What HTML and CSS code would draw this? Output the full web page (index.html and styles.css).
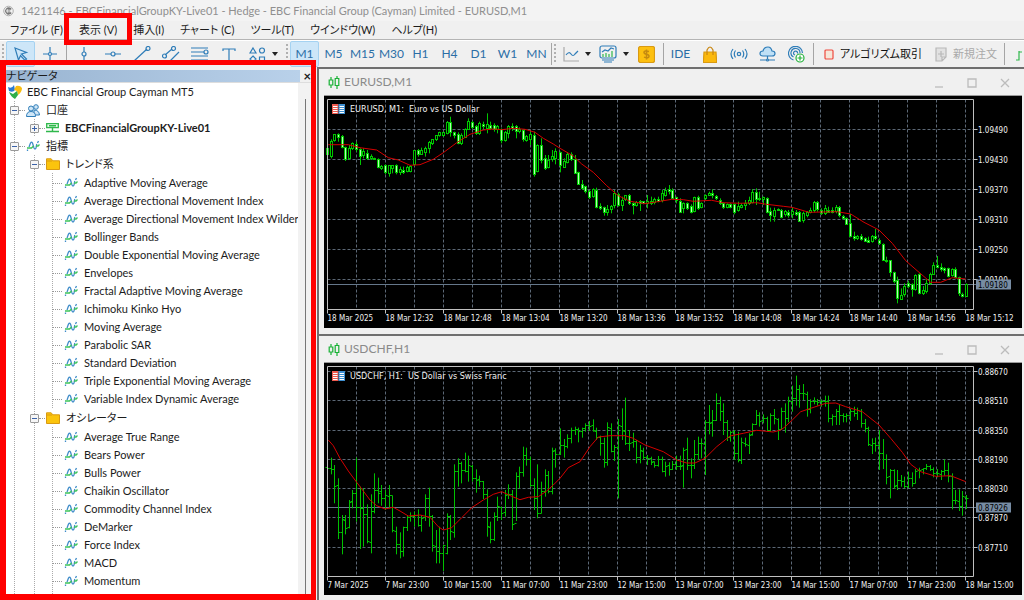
FILE: index.html
```html
<!DOCTYPE html>
<html lang="ja">
<head>
<meta charset="utf-8">
<title>EBC Financial Group Cayman MT5</title>
<link rel="stylesheet" href="styles.css">
</head>
<body>
<svg class="defs" aria-hidden="true">
  <symbol id="indicator" viewBox="0 0 14 12">
    <path d="M1.500 11V9.500M3 7l1.500-4q1-1.500 2 0l1.500 5q1 2 2 0l.8-4M11.500 3l1-2" fill="none" stroke="#3f8cc9" stroke-width="1.300"/>
    <path d="M1 8h4.500l2-2M10 6h2l1.500-1.500" fill="none" stroke="#3cc45a" stroke-width="1.400"/>
  </symbol>
  <symbol id="folder" viewBox="0 0 14 12">
    <path d="M.5 11.500V.8h4.700l1.600 2h6.700v8.700z" fill="#fbc40d" stroke="#d99a12"/>
    <path d="M1 3h5" stroke="#d99a12"/>
  </symbol>
  <symbol id="candles" viewBox="0 0 12 13">
    <path d="M3 1v11M9 0v13" stroke="#18b135" stroke-width="1.200"/>
    <path d="M1.200 4h3.600v5H1.200zM7.200 2.500h3.600v7H7.200z" fill="#f0f0f0" stroke="#18b135" stroke-width="1.200"/>
  </symbol>
</svg>

<header class="titlebar">
  <svg class="app-icon" viewBox="0 0 12 12"><circle cx="6" cy="6" r="5.200" fill="none" stroke="#aaa"/><path d="M9 3.500Q4 1 2.800 6 4 11 9 8.500M5 4h4M5 6h3M5 8h4" fill="none" stroke="#777" stroke-width="1.300"/></svg>
  <span>1421146 - EBCFinancialGroupKY-Live01 - Hedge - EBC Financial Group (Cayman) Limited - EURUSD,M1</span>
</header>

<nav class="menubar">
  <button>ファイル (F)</button>
  <button class="marked">表示 (V)</button>
  <button>挿入(I)</button>
  <button>チャート (C)</button>
  <button>ツール(T)</button>
  <button>ウインドウ(W)</button>
  <button>ヘルプ(H)</button>
</nav>

<div class="toolbar">
  <i class="grip"></i>
  <button class="tool on" aria-label="Cursor"><svg width="16" height="16" viewBox="0 0 16 16"><path d="M2 2l11.500 4.500-5 1.500 5 5-1.500 1.500-4.500-5-2 4.500z"/></svg></button>
  <button class="tool" aria-label="Crosshair"><svg width="16" height="16" viewBox="0 0 16 16"><path d="M8 1v5.500M8 9.500V15M1 8h5.500M9.500 8H15"/><circle cx="8" cy="8" r="1.500"/></svg></button>
  <i class="sep"></i>
  <button class="tool" aria-label="Vertical line"><svg width="16" height="16" viewBox="0 0 16 16"><path d="M8 1v5M8 10v5"/><circle cx="8" cy="8" r="2"/></svg></button>
  <button class="tool" aria-label="Horizontal line"><svg width="16" height="16" viewBox="0 0 16 16"><path d="M0 8h6M10 8h6"/><circle cx="8" cy="8" r="2"/></svg></button>
  <button class="tool" aria-label="Trendline"><svg width="18" height="16" viewBox="0 0 18 16"><path d="M1 15L14 3"/><circle cx="15" cy="2.500" r="2"/></svg></button>
  <button class="tool" aria-label="Channel"><svg width="18" height="16" viewBox="0 0 18 16"><path d="M3 9l7-6M8 15l9-9"/><circle cx="11.500" cy="2.500" r="2"/><circle cx="2.500" cy="10" r="2"/></svg></button>
  <button class="tool" aria-label="Fibonacci"><svg width="18" height="16" viewBox="0 0 18 16"><path d="M0 2h17M0 6h13M0 10h17M0 14h17"/><circle cx="15" cy="6" r="2"/></svg></button>
  <button class="tool" aria-label="Text"><svg width="14" height="16" viewBox="0 0 14 16"><path d="M1 5V3h12v2M7 3v12"/></svg></button>
  <button class="tool wide shapes" aria-label="Shapes"><svg width="17" height="17" viewBox="0 0 17 17"><path d="M4 2l3 5H1z"/><circle cx="13" cy="4.500" r="2.500"/><path d="M4 10l3 3-3 3-3-3zM10.500 11h5v5h-5z"/></svg><b class="caret"></b></button>
  <i class="grip"></i>
  <button class="tool on">M1</button>
  <button class="tool">M5</button>
  <button class="tool">M15</button>
  <button class="tool">M30</button>
  <button class="tool">H1</button>
  <button class="tool">H4</button>
  <button class="tool">D1</button>
  <button class="tool">W1</button>
  <button class="tool">MN</button>
  <i class="sep tight"></i><i class="grip"></i>
  <button class="tool wide" aria-label="Chart type"><svg width="16" height="16" viewBox="0 0 16 16"><path d="M1 1v14h15" stroke="#aaa"/><path d="M3 9q3-4 5-1t4 0l3-3"/></svg><b class="caret"></b></button>
  <button class="tool wide" aria-label="Indicators"><svg width="18" height="18" viewBox="0 0 18 18"><rect x="1" y="1" width="16" height="12" rx="2"/><path d="M3 15h12M5 17h8"/><path d="M3 7l3-2 3 1 3-3 3 1"/><path d="M4 12V9M7 12V8M10 12V9M13 12V6" stroke="#2fb84b"/></svg><b class="caret"></b></button>
  <button class="tool" aria-label="Trade"><svg width="17" height="17" viewBox="0 0 17 17"><rect x=".5" y=".5" width="16" height="16" rx="2" fill="#fdc010" stroke="#d99a12"/><path d="M11 5.500q-5-1.500-5 .8 0 1.700 2.500 2t2.500 2q0 2.500-5 .8M8.500 3.500v10" stroke="#c58a10" stroke-width="1.500"/></svg></button>
  <i class="sep"></i>
  <button class="tool">IDE</button>
  <button class="tool" aria-label="Market"><svg width="14" height="17" viewBox="0 0 14 17"><path d="M1 6h12l.7 10.500H.3z" fill="#fbb90e" stroke="#d99a12"/><path d="M4 9V4q3-6 6 0v5" stroke="#c88612"/></svg></button>
  <button class="tool" aria-label="Signals"><svg width="18" height="12" viewBox="0 0 18 12"><circle cx="9" cy="6" r="1.700"/><path d="M5.500 2.500q-2.500 3.500 0 7M12.500 2.500q2.500 3.500 0 7M3 1q-4 5 0 10M15 1q4 5 0 10"/></svg></button>
  <button class="tool" aria-label="VPS"><svg width="17" height="16" viewBox="0 0 17 16"><path d="M4 10Q1 10 1 7.500T4 5q1-4 5-4 3 0 4 4 3 0 3 2.500T13 10z" fill="#bfe0f6"/><path d="M8.500 10v3M1 14h6M10 14h6"/><circle cx="8.500" cy="14" r="1"/></svg></button>
  <button class="tool" aria-label="Copy trading"><svg width="17" height="17" viewBox="0 0 17 17"><path d="M5.500 14A7 7 0 1 1 14.500 7M5.500 11A4.500 4.500 0 1 1 12 7M7 9a2 2 0 1 1 2.500-1.500"/><circle cx="12" cy="12" r="4" fill="#fff" stroke="#23b13a"/><path d="M12 9.500v5M9.500 12h5" stroke="#23b13a"/></svg></button>
  <i class="sep"></i>
  <button class="tool text"><svg width="10" height="11" viewBox="0 0 10 11"><rect x="1" y="1" width="8" height="9" rx="1" fill="#f6e6d8" stroke="#ee4a3e"/></svg>アルゴリズム取引</button>
  <button class="tool text" disabled><svg width="12" height="15" viewBox="0 0 12 15"><path d="M1 1h10v9l-4 4H1zM11 10H7v4M6 4v6M3 7h6" stroke="#b8b8b8" fill="#e2e2e2"/></svg>新規注文</button>
  <i class="sep"></i>
  <button class="tool last" aria-label="Bar chart"><svg width="16" height="16" viewBox="0 0 16 16"><path d="M1 14h3V5M4 6h3M11 1v9M11 4H9M11 9h4" stroke="#2fb84b"/></svg></button>
</div>

<main class="workspace">
  <aside class="navigator">
    <div class="nav-head"><span>ナビゲータ</span><button aria-label="閉じる">×</button></div>
    <div class="nav-body">
      <div class="tree">
        <div class="row root"><svg width="14" height="14" viewBox="0 0 14 14"><path d="M0 2q4 2 6-2l1 5q-2 3-6 1z" fill="#2a7ad1"/><path d="M8 1q4-1 6 2 0 4-4 7l-1-4-3-1z" fill="#f9bd12"/><path d="M1 7l4 2 4-3 1 4-3 4q-4-2-6-7z" fill="#2eae49"/></svg>EBC Financial Group Cayman MT5</div>
        <ul class="l1">
          <li>
            <div class="row"><i class="box"></i><svg width="14" height="13" viewBox="0 0 14 13"><g fill="#cfe6f7" stroke="#2f7db8"><circle cx="10" cy="3" r="2.300"/><path d="M8 6q5 0 5.500 5H8z"/><circle cx="5" cy="4.500" r="2.500"/><path d="M.5 12.500q0-5 4.500-5t4.500 5z"/></g></svg>口座</div>
            <ul class="l2"><li><div class="row strong"><i class="box plus"></i><svg width="13" height="10" viewBox="0 0 13 10"><path d="M.7.7h11.600v4H.7z" fill="#e2f8e5" stroke="#2fb84b" stroke-width="1.300"/><path d="M3 2.700h7M6.500 5v3M0 8.500h13" stroke="#2fb84b" stroke-width="1.400"/></svg>EBCFinancialGroupKY-Live01</div></li></ul>
          </li>
          <li>
            <div class="row"><i class="box"></i><svg width="14" height="12"><use href="#indicator"/></svg>指標</div>
            <ul class="l2">
              <li><div class="row"><i class="box"></i><svg width="14" height="12"><use href="#folder"/></svg>トレンド系</div>
                <ul class="l3" data-items="Adaptive Moving Average|Average Directional Movement Index|Average Directional Movement Index Wilder|Bollinger Bands|Double Exponential Moving Average|Envelopes|Fractal Adaptive Moving Average|Ichimoku Kinko Hyo|Moving Average|Parabolic SAR|Standard Deviation|Triple Exponential Moving Average|Variable Index Dynamic Average"></ul>
              </li>
              <li><div class="row"><i class="box"></i><svg width="14" height="12"><use href="#folder"/></svg>オシレーター</div>
                <ul class="l3 open" data-items="Average True Range|Bears Power|Bulls Power|Chaikin Oscillator|Commodity Channel Index|DeMarker|Force Index|MACD|Momentum"></ul>
              </li>
            </ul>
          </li>
        </ul>
      </div>
      <div class="track"></div>
    </div>
    <div class="marker"></div>
  </aside>

  <section class="mdi">
    <article class="window">
      <div class="caption"><svg width="12" height="13"><use href="#candles"/></svg><h2>EURUSD,M1</h2>
        <button aria-label="最小化"><svg width="10" height="10" viewBox="0 0 10 10"><path d="M1 9h8"/></svg></button>
        <button aria-label="最大化"><svg width="10" height="10" viewBox="0 0 10 10"><path d="M1 1h8v8H1z"/></svg></button>
        <button aria-label="閉じる"><svg width="10" height="10" viewBox="0 0 10 10"><path d="M1 1l8 8M9 1L1 9"/></svg></button>
      </div>
      <svg class="chart" id="eurusd" viewBox="324 96 698 232"></svg>
    </article>
    <article class="window">
      <div class="caption"><svg width="12" height="13"><use href="#candles"/></svg><h2>USDCHF,H1</h2>
        <button aria-label="最小化"><svg width="10" height="10" viewBox="0 0 10 10"><path d="M1 9h8"/></svg></button>
        <button aria-label="最大化"><svg width="10" height="10" viewBox="0 0 10 10"><path d="M1 1h8v8H1z"/></svg></button>
        <button aria-label="閉じる"><svg width="10" height="10" viewBox="0 0 10 10"><path d="M1 1l8 8M9 1L1 9"/></svg></button>
      </div>
      <svg class="chart" id="usdchf" viewBox="324 363 698 232"></svg>
    </article>
  </section>
</main>
<script src="charts.js"></script>
</body>
</html>
```
FILE: styles.css
```css
* { box-sizing: border-box; }
body {
  margin: 0;
  height: 100vh;
  overflow: hidden;
  display: flex;
  flex-direction: column;
  background: #f0f0f0;
  color: #1c1c1c;
  font: 11px/18px Lato, "Noto Sans CJK JP", sans-serif;
  font-feature-settings: "palt";
}
button {
  margin: 0;
  padding: 0;
  border: 0;
  background: none;
  color: inherit;
  font: inherit;
  font-feature-settings: inherit;
}
ul { list-style: none; margin: 0; padding: 0; }
svg { flex: none; }
.defs { position: absolute; width: 0; height: 0; }

.titlebar {
  display: flex;
  align-items: center;
  gap: 7px;
  height: 21px;
  padding-left: 3px;
  background: #f3f3f3;
  color: #8f8f8f;
  white-space: nowrap;
}
.app-icon { width: 11px; height: 12px; }

.menubar {
  display: flex;
  gap: 16px;
  height: 19px;
  padding-left: 10px;
  border-bottom: 1px solid #b4b4b4;
  white-space: nowrap;
}
.marked { position: relative; }
.marked::after {
  content: "";
  position: absolute;
  inset: -8px -15px -6px;
  border: 5px solid #f00;
  z-index: 3;
}

.toolbar {
  display: flex;
  align-items: center;
  height: 27px;
  border-top: 1px solid #fff;
  overflow: hidden;
  white-space: nowrap;
}
.grip {
  flex: none;
  width: 2px;
  height: 20px;
  margin: 0 2px;
  background: repeating-linear-gradient(#b0b0b0 0 2px, transparent 2px 4px);
}
.sep { flex: none; width: 1px; height: 22px; margin: 0 2px; background: #a5a5a5; }
.tight { margin: 0; }
.tool {
  flex: none;
  display: flex;
  align-items: center;
  justify-content: center;
  width: 29px;
  height: 26px;
  color: #2b6ea6;
  font-size: 12px;
}
.tool svg { fill: none; stroke: #2f7db8; stroke-width: 1.2; }
.on { background: #cde6f8; border: 1px solid #a5d2f1; border-radius: 2px; }
.wide { width: 37px; gap: 6px; }
.shapes { width: 41px; }
.caret { border: 3px solid transparent; border-top: 4px solid #222; border-bottom: 0; }
.text { width: auto; padding: 0 5px 0 8px; gap: 6px; color: #111; font-size: 11px; }
.text:disabled { color: #aaa; }
.last { margin-left: 2px; }

.workspace { flex: 1; display: flex; min-height: 0; }
.navigator {
  position: relative;
  flex: none;
  width: 316px;
  padding: 3px 5px 6px 6px;
  display: flex;
  flex-direction: column;
}
.nav-head { display: flex; height: 12px; line-height: 12px; background: #f0f0f0; }
.nav-head span { flex: 1; background: linear-gradient(90deg, #99b4d1, #b9d1ea); }
.nav-head button { width: 10px; margin-left: 1px; font-size: 13px; font-weight: 700; text-align: right; }
.nav-body { flex: 1; display: flex; min-height: 0; overflow: hidden; border-top: 1px solid #ddd; background: #fff; }
.tree { flex: 1; overflow: hidden; white-space: nowrap; }
.track { width: 13px; padding-left: 7px; background: #f2f2f2; }
.track::before { content: ""; display: block; width: 1px; height: 100%; margin-top: 16px; background: #777; }
.marker { position: absolute; inset: -7px 0 0; border: 6px solid #f00; border-width: 5px 5px 6px 6px; z-index: 2; }
.row { display: flex; align-items: center; gap: 6px; height: 18px; }
.root { padding-left: 2px; gap: 5px; }
.strong { font-weight: 700; }
.box {
  position: relative;
  flex: none;
  width: 9px;
  height: 9px;
  border: 1px solid #999;
  border-radius: 1px;
  background: linear-gradient(#3a62a8, #3a62a8) center / 5px 1px no-repeat #f6f6f6;
}
.plus { background: linear-gradient(#3a62a8, #3a62a8) center / 5px 1px no-repeat, linear-gradient(#3a62a8, #3a62a8) center / 1px 5px no-repeat #f6f6f6; }
.box::after { content: ""; position: absolute; left: 8px; top: 3px; width: 6px; border-top: 1px dotted #999; }
.box + svg { margin-left: 1px; }
.l1 { padding-left: 4px; background: repeating-linear-gradient(#aaa 0 1px, #fff 1px 2px) 8px 0 / 1px 100% no-repeat; }
.l2 { padding-left: 20px; background: repeating-linear-gradient(#aaa 0 1px, #fff 1px 2px) 24px 0 / 1px 100% no-repeat; }
.l3 { padding: 1px 0 0 22px; background: repeating-linear-gradient(#aaa 0 1px, #fff 1px 2px) 22px 0 / 1px 100% no-repeat; }
.open { padding-bottom: 8px; }
.l2 > li + li { margin-top: 1px; }
.l3 .row::before { content: ""; flex: none; width: 10px; border-top: 1px dotted #999; }
.l3 .row svg { margin-left: -4px; }

.mdi {
  flex: 1;
  min-width: 0;
  margin-left: 1px;
  border: 2px solid #6f6f6f;
  border-width: 2px 0 0 2px;
  overflow: hidden;
}
.window { padding: 0 2px 6px 5px; border-bottom: 2px solid #6f6f6f; }
.caption { display: flex; align-items: center; height: 27px; padding: 0 12px 0 4px; border-bottom: 1px solid #9a9a9a; }
.caption h2 { flex: 1; margin: 0 0 0 4px; font-size: 12px; font-weight: 400; color: #8a8a8a; }
.caption button { width: 10px; margin-left: 23px; padding-top: 2px; }
.caption button svg { display: block; fill: none; stroke: #bcbcbc; stroke-width: 1.3; }
.chart { display: block; width: 100%; height: auto; background: #000; font: 8px "DejaVu Sans Condensed", "DejaVu Sans", sans-serif; }
.chart text { fill: #f2f2f2; }
.chart .heading { font-size: 9px; }
.grid { fill: none; stroke: #5c6876; stroke-dasharray: 3 2; }
.axis { fill: none; stroke: #c0c0c0; }
.level { stroke: #65778a; }
.bars { fill: none; stroke: #00c000; }
.candle-up { fill: #000; stroke: #00c800; }
.candle-down { fill: #b4ffb4; stroke: #00c800; }
.average { fill: none; stroke: #d40000; }
.tag { fill: #778ca3; }
.chart .tag-text { fill: #000; }
```
FILE: charts.js
```js
document.querySelectorAll('.l3').forEach(list => {
  list.innerHTML = list.dataset.items.split('|').map(name =>
    `<li><div class="row"><svg width="14" height="12"><use href="#indicator"/></svg>${name}</div></li>`).join('');
});

// Each series run: start x, base y, then one record per bar in thirds of a unit.
// Candle record: high low bodyTop bodyBottom (trailing f = falling bar).
const eurusd = [
  [327.5, 95, '150 182 160 178f,133 190 138 182,118 140 118 137,115 140 117 125f,120 160 125 157f,155 198 157 192f,150 195 160 190,142 165 145 160,140 170 148 163f,160 210 162 183f,160 190 168 180,165 195 175 190f,178 195 185 192,188 195 190 194f,190 220 193 217f,210 225 213 220,208 238 212 234f,210 245 212 235,210 235 212 222,208 238 212 233f,215 240 222 230,215 237 225 232f,212 232 217 228,210 232 215 230,165 212 167 210,162 185 167 180f,158 180 165 178,155 185 160 172,138 175 142 160,132 150 132 145,120 138 122 135,110 125 112 122,110 125 113 122,78 118 82 115,65 125 82 112f,110 130 112 122f,112 148 117 143f,115 150 120 143,100 128 102 125,70 105 78 103,78 102 82 98f,90 120 95 115f,80 120 85 115,80 103 88 95f,55 115 87 98,80 105 90 100f,85 110 92 103f,90 115 95 103,100 145 103 137f,108 140 112 137,90 130 93 115,85 108 95 102f,90 130 95 110f,97 115 102 108,102 140 105 133f,120 140 123 135,110 150 118 133,110 245 120 237f,148 232 150 228,130 205 150 195f,180 225 190 220f,180 220 195 215,165 200 185 195,160 208 170 192'],
  [560.5, 95, '170 232 172 210f,190 218 198 215,172 205 178 202,172 198 178 193f,180 237 192 235f,230 270 233 268f,255 285 267 280f,272 295 275 290f,285 312 290 308f,280 308 283 305,278 340 285 337f,325 345 333 340f,335 362 337 352f,330 362 343 353,330 355 335 345,285 340 295 330,293 335 298 332f,305 348 315 330,300 318 302 315,297 330 302 325f,322 358 325 330f,318 335 322 332,315 348 318 325f,318 328 320 325f,300 340 318 325,305 330 320 325,308 328 312 322,305 322 312 318f,285 322 295 317,278 305 285 300,270 298 284 290f,280 312 285 308f,305 325 308 318f,310 352 318 350f,322 355 325 340,322 345 325 340f,328 355 335 352f,305 352 307 348,302 345 307 340f,322 340 325 338,298 315 302 312,290 302 295 300,283 310 295 302f,300 315 305 312f,310 330 315 325f,322 342 325 337f,325 340 327 335,325 340 328 338f,325 358 327 350f,320 350 335 348,325 340 330 335,315 345 325 330,305 330 315 325,282 325 293 322,280 330 292 312f,290 318 310 314f,305 330 308 315,307 355 310 353f,338 380 350 362f,338 380 345 362,340 348 343 347,342 370 345 365f,345 365 350 360,345 368 352 360f'],
  [792.5, 160, '142 175 155 165,150 168 157 163f,153 185 157 183f,155 188 160 182,153 172 157 167,143 160 150 157,123 157 128 152,123 155 128 150f,145 165 150 158f,135 165 145 160,140 158 150 155f,142 160 150 157f,135 160 142 155,138 172 143 168f,165 178 170 175f,172 195 175 192f,162 232 190 230f,215 242 228 235f,225 240 230 235,222 242 228 238f,232 245 235 243f,230 248 240 245f,225 248 230 245,207 240 230 235f,235 255 240 250f,250 303 253 302f,290 308 300 303f,300 350 302 338f,335 370 338 365f,350 430 360 415f,385 420 405 417,370 410 380 405,362 385 370 378f,370 410 373 387f,343 392 345 388,340 403 343 400f,378 405 392 402,358 400 370 395,338 375 343 370,307 345 315 342,288 325 315 320f,310 335 322 328f,322 340 325 332f,323 352 325 348f,325 350 328 347,322 355 327 352f,350 408 353 402f,398 412 402 408f,370 410 373 408']
];
// Bar record: high low open close.
const usdchf = [
  [327.5, 335, '390 405 398 400,368 418 400 402,390 505 402 455,430 612 452 592,540 658 592 552,540 598 555 580,495 580 578 502,465 520 500 475,368 560 475 518,455 642 518 520,460 635 520 538,508 625 538 620,478 655 622 528,415 535 528 465,428 505 465 475,450 512 470 490,465 525 490 480,450 520 485 482,482 592 482 585,575 658 588 628,592 670 628 650,575 665 650 578,542 588 578 548,532 560 546 543,530 575 545 540,523 575 540 570,540 590 570 550,478 558 548 490,458 575 490 545,540 650 545 632,585 685 635 648,575 685 648 655,630 708 655 632,535 658 655 545,540 615 545 590,388 608 592 408,370 455 408 385,380 445 385 405,353 412 405 408,362 440 408 392,390 440 395 430,403 473 430 435,422 455 432 440,438 492 440 478,463 605 478 575,560 625 578 612,532 618 612 545,485 558 545 515,515 555 518 535,465 545 532 480,448 492 478 478,465 585 478 568,412 558 565 425,395 460 425 412,335 425 412 362,338 392 362 372,365 455 372 450,430 525 450 490,388 550 490 535,440 535 535 470,403 485 470 420,408 475 420 470,338 478 470 348,340 398 345 358'],
  [560.5, 335, '280 360 358 330,312 368 330 335,298 340 335 310,278 325 310 285,275 300 285 282,278 322 282 290,278 308 290 280,265 290 280 270,258 288 270 275,253 290 272 287,278 315 288 308,302 362 308 325,308 398 325 382,262 392 382 278,265 352 280 350,330 378 350 338,252 490 338 272,220 315 275 285,188 330 288 325,285 348 325 325,293 338 322 320,315 385 320 368,330 385 368 345,338 375 348 368,360 390 368 370,365 390 370 382,380 398 380 392,363 395 392 372,365 412 372 408,380 425 408 395,382 422 392 402,378 405 402 388,362 405 388 395,362 405 395 395,338 458 392 345,308 405 342 392,370 430 392 392,315 402 392 358,305 375 358 325,310 370 325 325,255 420 328 262,210 298 262 265,225 305 262 255,175 258 255 205,185 258 205 228,205 300 228 262,255 318 262 308,288 320 308 292,285 375 290 355,290 382 355 375,308 387 375 322,308 335 325 328,295 357 330 300,265 302 298 268,225 270 268 242,232 275 242 258,238 265 255 250,245 290 250 285,235 290 285 240,222 268 240 250,250 315 252 282,218 285 282 228,205 293 228 250,185 262 250 198'],
  [792.5, 335, '152 230 200 190,122 212 190 162,150 218 162 175,147 195 175 175,170 245 178 222,193 235 222 198,187 208 198 198,192 212 198 202,193 215 200 200,182 215 200 198,182 262 198 250,238 272 250 245,222 270 245 228,210 270 228 240,235 262 240 245,235 262 245 240,222 258 240 228,215 245 228 235,218 255 235 225,222 278 228 265,252 292 265 280,275 333 280 328,310 357 330 325,308 350 325 332,285 405 332 355,312 402 355 372,358 448 372 428,402 490 425 405,403 462 405 455,405 465 452 435,420 455 435 440,425 460 440 455,410 460 455 430,412 455 430 445,402 445 445 408,398 430 405 405,400 418 402 400,387 405 400 395,390 408 395 402,397 427 402 415,402 427 415 415,405 435 418 410,373 422 408 405,383 442 405 425,415 523 425 495,465 508 495 497,463 528 500 515,468 542 515 485,480 522 488 490']
];
const eurusdAverage = [
  [320, 95, '25,149 85,149 120,158 170,165 205,188 235,195 270,211 300,209 340,193 370,173 410,143 450,118 490,105 520,102 545,104 580,100 615,103 645,112 670,130 700,147'],
  [550, 95, '30,160 70,183 95,207 130,232 170,272 205,302 240,319 285,326 330,319 365,313 400,314 430,319 485,316 520,323 570,325 620,323 650,328 700,334'],
  [784, 160, '24,142 75,157 160,155 200,162 240,187 285,210 325,250 365,302 405,337 440,367 470,367 505,353 545,357']
];
const usdchfAverage = [
  [320, 335, '25,315 40,332 60,370 85,408 110,442 130,468 150,495 170,512 195,522 220,517 240,528 265,543 300,540 330,547 355,575 370,585 395,578 425,548 455,518 490,495 520,478 545,470 575,484 600,494 625,487 655,485 680,468'],
  [550, 335, '10,450 30,430 55,398 90,380 120,335 145,306 180,302 225,302 250,310 285,330 340,350 380,375 410,384 435,384 465,370 500,335 540,303 580,295 620,286 670,291 690,286'],
  [784, 335, '0,278 25,255 50,230 80,220 125,205 155,204 185,215 235,230 285,270 320,310 355,352 380,388 410,410 455,424 500,422 545,440']
];

const LEFT = 327.5, RIGHT = 973.5, PITCH = 3.625;
const snap = v => Math.floor(v) + 0.5;

function drawChart(id, o) {
  const bottom = o.top + 210;
  let grid = '', axis = `M${LEFT} ${o.top}H${RIGHT}V${bottom}H${LEFT}z`, labels = '', series = '';
  for (let i = 0; i < 22; i++) grid += `M${356.5 + i * 29} ${o.top}V${bottom}`;
  o.prices.forEach(([y, text]) => {
    grid += `M${LEFT} ${y}H${RIGHT}`;
    axis += `M${RIGHT} ${y}h4`;
    labels += `<text x="978" y="${y + 3}">${text}</text>`;
  });
  o.times.forEach((text, i) => {
    axis += `M${LEFT + i * 58} ${bottom}v4`;
    labels += `<text x="${LEFT + i * 58}" y="${bottom + 11.5}">${text}</text>`;
  });
  o.data.forEach(([start, base, run]) => run.split(',').forEach((rec, i) => {
    const x = snap(start + i * PITCH);
    const [a, b, c, d] = rec.split(' ').map(v => base + parseInt(v, 10) / 3);
    if (o.candles) {
      const y = snap(c), h = Math.max(1, Math.round(d - c));
      series += `<g class="candle-${rec.endsWith('f') ? 'down' : 'up'}"><path d="M${x} ${a}V${b}"/><rect x="${x - 1}" y="${y}" width="2" height="${h}"/></g>`;
    } else {
      series += `<path class="bars" d="M${x} ${a}V${b}M${x - 2} ${snap(c)}h2M${x} ${snap(d)}h2"/>`;
    }
  }));
  const avg = o.average.map(([x0, y0, pts]) => pts.split(' ').map(p => {
    const [x, y] = p.split(',');
    return `${(x0 + x / 3).toFixed(1)},${(y0 + y / 3).toFixed(1)}`;
  }).join(' ')).join(' ');
  document.getElementById(id).innerHTML = `
    <path class="grid" d="${grid}"/>
    <path class="level" d="M${LEFT} ${o.level}H${RIGHT + 3}"/>
    ${series}<polyline class="average" points="${avg}"/><path class="axis" d="${axis}"/>${labels}
    <rect class="tag" x="976" y="${o.level - 5}" width="35" height="10"/>
    <text class="tag-text" x="978" y="${o.level + 3}">${o.now}</text>
    <rect x="332" y="${o.top + 4.5}" width="6.500" height="10" fill="#ee5a4e"/><rect x="338.500" y="${o.top + 4.5}" width="6.500" height="10" fill="#3f8fd0"/>
    <path d="M333 ${o.top + 7}h4.500m2 0h4.500M333 ${o.top + 9}h4.500m2 0h4.500M333 ${o.top + 11}h4.500m2 0h4.500M333 ${o.top + 13}h4.500m2 0h4.500" stroke="#fff"/>
    <text class="heading" x="350" y="${o.top + 12.5}" xml:space="preserve">${o.title}</text>`;
}

drawChart('eurusd', {
  top: 99.5, candles: true, data: eurusd, average: eurusdAverage, level: 284.5, now: '1.09180',
  title: 'EURUSD, M1:  Euro vs US Dollar',
  prices: [[129.5, '1.09490'], [159.5, '1.09430'], [189.5, '1.09370'], [219.5, '1.09310'], [249.5, '1.09250'], [279.5, '1.09190']],
  times: ['18 Mar 2025', '18 Mar 12:32', '18 Mar 12:48', '18 Mar 13:04', '18 Mar 13:20', '18 Mar 13:36', '18 Mar 13:52', '18 Mar 14:08', '18 Mar 14:24', '18 Mar 14:40', '18 Mar 14:56', '18 Mar 15:12']
});
drawChart('usdchf', {
  top: 366.5, data: usdchf, average: usdchfAverage, level: 507.5, now: '0.87926',
  title: 'USDCHF, H1:  US Dollar vs Swiss Franc',
  prices: [[371.5, '0.88670'], [400.5, '0.88510'], [430.5, '0.88350'], [459.5, '0.88190'], [488.5, '0.88030'], [517.5, '0.87870'], [547.5, '0.87710']],
  times: ['7 Mar 2025', '7 Mar 23:00', '10 Mar 15:00', '11 Mar 07:00', '11 Mar 23:00', '12 Mar 15:00', '13 Mar 07:00', '13 Mar 23:00', '14 Mar 15:00', '17 Mar 07:00', '17 Mar 23:00', '18 Mar 15:00']
});
```
